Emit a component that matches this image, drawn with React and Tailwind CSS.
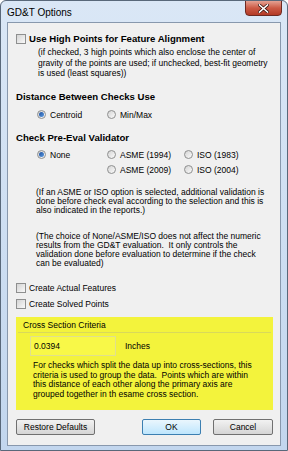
const Check = ({ label, bold }) => (
  <div className="flex items-center h-[10px]">
    <span className="w-[10px] h-[10px] border border-[#8e8f8f] bg-gradient-to-br from-[#d4d4d4] to-[#f9f9f9] shrink-0"></span>
    <span className={bold ? 'ml-[3px] text-[9.6px] font-bold leading-[12px] whitespace-nowrap' : 'ml-[3px] text-[8.5px] leading-[10px] whitespace-nowrap'}>{label}</span>
  </div>
)

const Radio = ({ label, checked }) => (
  <div className="flex items-center h-[10px]">
    <span className="w-[9px] h-[9px] rounded-full border border-[#8e8f8f] bg-gradient-to-br from-[#d4d4d4] to-[#fbfbfb] flex items-center justify-center shrink-0">
      {checked && <span className="w-[5px] h-[5px] rounded-full bg-gradient-to-br from-[#1d4f9e] to-[#5d9be0]"></span>}
    </span>
    <span className="ml-[4px] text-[8.5px] leading-[10px] whitespace-nowrap">{label}</span>
  </div>
)

const Button = ({ children, width, primary }) => (
  <div
    className={
      'h-[16px] rounded-[2px] border flex items-center justify-center text-[8.5px] ' +
      (primary
        ? 'border-[#3c7fb1] bg-gradient-to-b from-[#eaf6fd] to-[#bee6fd]'
        : 'border-[#707070] bg-gradient-to-b from-[#f2f2f2] to-[#d5d5d5]')
    }
    style={{ width }}
  >
    {children}
  </div>
)

export default function App() {
  return (
    <div
      className="w-[288px] h-[451px] flex flex-col rounded-t-[6px] border border-[#59687a] bg-gradient-to-b from-[#dae7f6] to-[#c2d6ee] text-black overflow-hidden"
      style={{ fontFamily: '"Liberation Sans", Arial, sans-serif' }}
    >
      {/* title bar */}
      <div className="h-[21px] flex items-start shrink-0">
        <span className="ml-[6px] mt-[6px] text-[10px] leading-[12px]">GD&amp;T Options</span>
        <div className="ml-auto mr-[5px] w-[37px] h-[16px] -mt-[1px] rounded-b-[4px] border border-[#6d2a22] bg-gradient-to-b from-[#e4a193] via-[#cc5a45] to-[#b33a26] flex items-center justify-center">
          <svg width="11" height="9" viewBox="0 0 11 9">
            <path d="M1.5 1 L9.5 8 M9.5 1 L1.5 8" stroke="#3a1410" strokeWidth="3" strokeLinecap="square" />
            <path d="M1.5 1 L9.5 8 M9.5 1 L1.5 8" stroke="#ffffff" strokeWidth="1.6" strokeLinecap="square" />
          </svg>
        </div>
      </div>

      {/* client area */}
      <div className="mx-[6px] mb-[4px] flex-1 border border-[#8898ad] bg-[#f0f0f0] flex flex-col pl-[8px] pr-[7px]">
        <div className="mt-[11px]">
          <Check label="Use High Points for Feature Alignment" bold />
        </div>
        <p className="mt-[3px] pl-[22px] text-[8.5px] leading-[10.5px] whitespace-nowrap">
          (if checked, 3 high points which also enclose the center of<br />
          gravity of the points are used; if unchecked, best-fit geometry<br />
          is used (least squares))
        </p>

        <div className="mt-[12px] text-[9.6px] font-bold leading-[12px]">Distance Between Checks Use</div>
        <div className="mt-[7px] pl-[21px] flex">
          <div className="w-[70px]"><Radio label="Centroid" checked /></div>
          <Radio label="Min/Max" />
        </div>

        <div className="mt-[12px] text-[9.6px] font-bold leading-[12px]">Check Pre-Eval Validator</div>
        <div className="mt-[6px] pl-[21px] grid grid-cols-[70px_77px_auto] gap-y-[5px]">
          <Radio label="None" checked />
          <Radio label="ASME (1994)" />
          <Radio label="ISO (1983)" />
          <div></div>
          <Radio label="ASME (2009)" />
          <Radio label="ISO (2004)" />
        </div>

        <p className="mt-[13px] pl-[20px] text-[8.5px] leading-[9px] whitespace-nowrap">
          (If an ASME or ISO option is selected, additional validation is<br />
          done before check eval according to the selection and this is<br />
          also indicated in the reports.)
        </p>
        <p className="mt-[17px] pl-[20px] text-[8.5px] leading-[9.2px] whitespace-nowrap">
          (The choice of None/ASME/ISO does not affect the numeric<br />
          results from the GD&amp;T evaluation.&nbsp; It only controls the<br />
          validation done before evaluation to determine if the check<br />
          can be evaluated)
        </p>

        <div className="mt-[15px]">
          <Check label="Create Actual Features" />
        </div>
        <div className="mt-[6px]">
          <Check label="Create Solved Points" />
        </div>

        {/* cross section group */}
        <div className="mt-[8px] h-[93px] bg-[#f3f33c] flex flex-col">
          <div className="mt-[3px] ml-[7px] text-[8.5px] leading-[10px]">Cross Section Criteria</div>
          <div className="mt-[2px] mx-[2px] h-px bg-[#d9d95a]"></div>
          <div className="mt-[3px] ml-[14px] flex items-center">
            <div className="w-[86px] h-[20px] border border-[#e0e08e] bg-[#f8f848] flex items-center pl-[3px] text-[8.5px]">0.0394</div>
            <span className="ml-[9px] text-[8.5px]">Inches</span>
          </div>
          <p className="mt-[5px] ml-[17px] text-[8.5px] leading-[9.4px] whitespace-nowrap">
            For checks which split the data up into cross-sections, this<br />
            criteria is used to group the data.&nbsp; Points which are within<br />
            this distance of each other along the primary axis are<br />
            grouped together in th esame cross section.
          </p>
        </div>

        {/* buttons */}
        <div className="mt-[9px] flex">
          <Button width={80}>Restore Defaults</Button>
          <div className="ml-[47px]"><Button width={59} primary>OK</Button></div>
          <div className="ml-[12px]"><Button width={60}>Cancel</Button></div>
        </div>
      </div>
    </div>
  )
}
